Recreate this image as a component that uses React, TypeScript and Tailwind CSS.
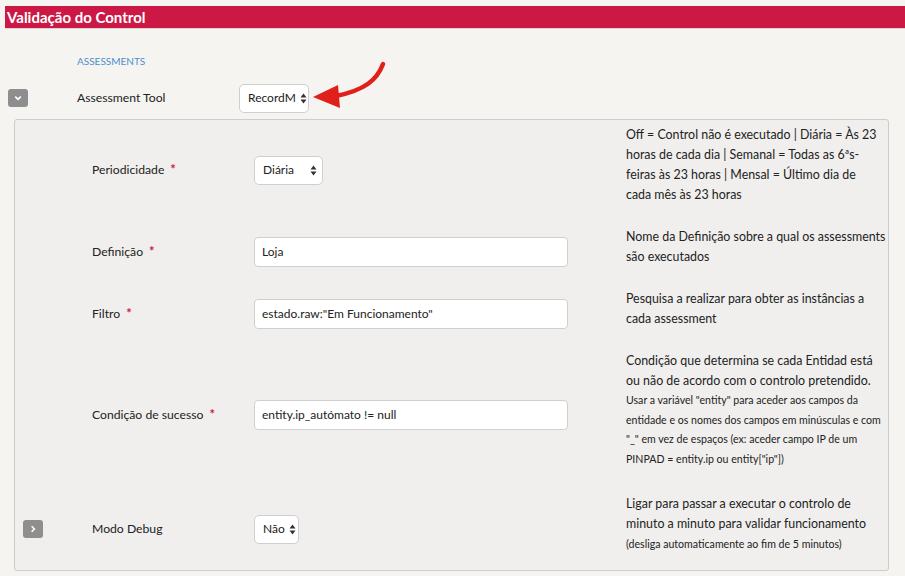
import React from "react";

const font = { fontFamily: "Lato, 'Open Sans', sans-serif" };

function Arrows() {
  return (
    <svg width="7" height="11" viewBox="0 0 7 11" className="ml-[4px] shrink-0">
      <path d="M3.5 0.5 L6.5 4.5 L0.5 4.5 Z" fill="#333" />
      <path d="M3.5 10.5 L6.5 6.5 L0.5 6.5 Z" fill="#333" />
    </svg>
  );
}

function FakeSelect({ value, w }: { value: string; w: string }) {
  return (
    <div className={`flex h-[29px] items-center justify-between rounded-[5px] border border-[#cfcfcf] bg-white pl-[8px] pr-[5px] text-[12px] text-[#222] ${w}`}>
      <span>{value}</span>
      <Arrows />
    </div>
  );
}

function FakeInput({ value }: { value: string }) {
  return (
    <div className="flex h-[30px] w-[314px] items-center rounded-[4px] border border-[#cfcfcf] bg-white px-[7px] text-[12px] text-[#222]">
      {value}
    </div>
  );
}

function ToggleBtn({ dir }: { dir: "down" | "right" }) {
  return (
    <div className="flex h-[18px] w-[20px] items-center justify-center rounded-[3px] bg-[#8e8e8e]">
      <svg width="8" height="8" viewBox="0 0 8 8">
        {dir === "down" ? (
          <path d="M1.2 2.6 L4 5.4 L6.8 2.6" stroke="#fff" strokeWidth="1.6" fill="none" />
        ) : (
          <path d="M2.6 1.2 L5.4 4 L2.6 6.8" stroke="#fff" strokeWidth="1.6" fill="none" />
        )}
      </svg>
    </div>
  );
}

function Row({
  label,
  required,
  control,
  help,
  toggle,
  className = "",
}: {
  label: string;
  required?: boolean;
  control: React.ReactNode;
  help: React.ReactNode;
  toggle?: boolean;
  className?: string;
}) {
  return (
    <div className={`flex items-center ${className}`}>
      <div className="w-[28px] shrink-0 pl-[8px]">{toggle && <ToggleBtn dir="right" />}</div>
      <div className="ml-[49px] w-[162px] shrink-0 text-[12.2px] text-[#222]">
        {label}
        {required && <span className="ml-[6px] text-[13px] font-bold text-[#cc1845]">*</span>}
      </div>
      <div className="w-[372px] shrink-0">{control}</div>
      <div className="pb-[10px] text-[12.4px] leading-[20px] whitespace-nowrap text-[#222]">{help}</div>
    </div>
  );
}

export default function App() {
  return (
    <div className="relative min-h-screen w-[905px] bg-[#f6f4f0] pt-[6px]" style={font}>
      <div className="ml-[5px] h-[23px] border-b border-[#d9d6d0] bg-[#cc1845] pl-[2px] text-[15px] leading-[22px] font-bold text-white">
        Validação do Control
      </div>

      <div className="mt-[26px] pl-[77px] text-[10px] leading-[12px] text-[#4a8fcc]">ASSESSMENTS</div>

      <div className="mt-[16px] flex h-[30px] items-center pl-[8px]">
        <ToggleBtn dir="down" />
        <div className="ml-[49px] w-[162px] text-[12.2px] text-[#222]">Assessment Tool</div>
        <FakeSelect value="RecordM" w="w-[70px]" />
      </div>

      <div className="mt-[6px] ml-[14px] flex w-[875px] flex-col gap-[12px] rounded-[3px] border border-[#cccccc] bg-[#f0efed] pt-[5px] pb-[6px]">
        <Row
          label="Periodicidade"
          required
          control={<FakeSelect value="Diária" w="w-[69px]" />}
          help={
            <>
              Off = Control não é executado | Diária = Às 23
              <br />
              horas de cada dia | Semanal = Todas as 6ªs-
              <br />
              feiras às 23 horas | Mensal = Último dia de
              <br />
              cada mês às 23 horas
            </>
          }
        />
        <Row
          label="Definição"
          required
          control={<FakeInput value="Loja" />}
          help={
            <>
              Nome da Definição sobre a qual os assessments
              <br />
              são executados
            </>
          }
        />
        <Row
          label="Filtro"
          required
          control={<FakeInput value={'estado.raw:"Em Funcionamento"'} />}
          help={
            <>
              Pesquisa a realizar para obter as instâncias a
              <br />
              cada assessment
            </>
          }
        />
        <Row
          label="Condição de sucesso"
          required
          control={<FakeInput value="entity.ip_autómato != null" />}
          help={
            <>
              Condição que determina se cada Entidad está
              <br />
              ou não de acordo com o controlo pretendido.
              <div className="text-[10.6px] leading-[19.5px]">
                Usar a variável "entity" para aceder aos campos da
                <br />
                entidade e os nomes dos campos em minúsculas e com
                <br />
                "_" em vez de espaços (ex: aceder campo IP de um
                <br />
                PINPAD = entity.ip ou entity["ip"])
              </div>
            </>
          }
        />
        <Row
          label="Modo Debug"
          toggle
          className="mt-[3px]"
          control={<FakeSelect value="Não" w="w-[45px]" />}
          help={
            <>
              Ligar para passar a executar o controlo de
              <br />
              minuto a minuto para validar funcionamento
              <div className="text-[10.6px] leading-[20px]">(desliga automaticamente ao fim de 5 minutos)</div>
            </>
          }
        />
      </div>

      {/* annotation arrow */}
      <svg className="pointer-events-none absolute top-0 left-0" width="905" height="576">
        <path d="M383 64 C377 80 365 90 336 96" stroke="#e0201a" strokeWidth="4.5" fill="none" strokeLinecap="round" />
        <path d="M313 97 L338 85 L340 108 Z" fill="#e0201a" />
      </svg>
    </div>
  );
}
